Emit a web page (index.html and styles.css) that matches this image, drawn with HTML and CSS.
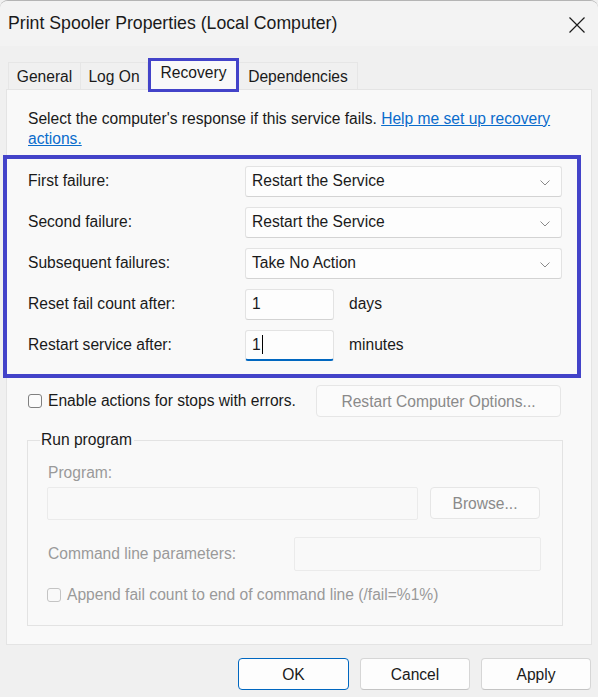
FILE: index.html
```html
<!DOCTYPE html>
<html lang="en">
<head>
<meta charset="utf-8">
<title>Print Spooler Properties (Local Computer)</title>
<link rel="stylesheet" href="styles.css">
</head>
<body>
<div class="window">
  <div class="titlebar">
    <span class="title">Print Spooler Properties (Local Computer)</span>
    <svg class="close" width="16" height="16" viewBox="0 0 16 16"><path d="M0.5 0.5L15.5 15.5M15.5 0.5L0.5 15.5" stroke="#1b1b1b" stroke-width="1.2" fill="none"/></svg>
  </div>
  <div class="tabs">
    <div class="tab t-general">General</div>
    <div class="tab t-logon">Log On</div>
    <div class="tab t-recovery active">Recovery</div>
    <div class="tab t-deps">Dependencies</div>
  </div>
  <div class="panel">
    <p class="intro">Select the computer's response if this service fails. <a class="link" href="#">Help me set up recovery actions.</a></p>
    <div class="highlight">
      <div class="row">
        <span class="label">First failure:</span>
        <div class="select">Restart the Service<svg class="chev" width="10" height="6" viewBox="0 0 10 6"><polyline points="0.5,0.5 5,5 9.5,0.5" fill="none" stroke="#8a8a8a" stroke-width="1"/></svg></div>
      </div>
      <div class="row">
        <span class="label">Second failure:</span>
        <div class="select">Restart the Service<svg class="chev" width="10" height="6" viewBox="0 0 10 6"><polyline points="0.5,0.5 5,5 9.5,0.5" fill="none" stroke="#8a8a8a" stroke-width="1"/></svg></div>
      </div>
      <div class="row">
        <span class="label">Subsequent failures:</span>
        <div class="select">Take No Action<svg class="chev" width="10" height="6" viewBox="0 0 10 6"><polyline points="0.5,0.5 5,5 9.5,0.5" fill="none" stroke="#8a8a8a" stroke-width="1"/></svg></div>
      </div>
      <div class="row">
        <span class="label">Reset fail count after:</span>
        <div class="input">1</div>
        <span class="unit">days</span>
      </div>
      <div class="row">
        <span class="label">Restart service after:</span>
        <div class="input focus">1<span class="caret"></span></div>
        <span class="unit">minutes</span>
      </div>
    </div>
    <div class="checkrow">
      <span class="check"><span class="box"></span>Enable actions for stops with errors.</span>
      <div class="btn disabled restart">Restart Computer Options...</div>
    </div>
    <fieldset class="group">
      <legend>Run program</legend>
      <div class="dlabel prog-label">Program:</div>
      <div class="prog-row">
        <div class="dinput prog-input"></div>
        <div class="btn disabled browse">Browse...</div>
      </div>
      <div class="cmd-row">
        <span class="dlabel cmd-label">Command line parameters:</span>
        <div class="dinput cmd-input"></div>
      </div>
      <div class="append-row">
        <span class="box dbox"></span><span class="dlabel">Append fail count to end of command line (/fail=%1%)</span>
      </div>
    </fieldset>
  </div>
  <div class="buttons">
    <div class="btn ok">OK</div>
    <div class="btn">Cancel</div>
    <div class="btn">Apply</div>
  </div>
</div>
</body>
</html>
```

FILE: styles.css
```css
* { box-sizing: border-box; }

html, body {
  margin: 0;
  padding: 0;
  background: #f0f0f0;
}

body {
  font-family: "Liberation Sans", Arial, sans-serif;
  font-size: 15.6px;
  color: #1a1a1a;
}

.window {
  width: 598px;
  height: 697px;
  background: #f0f0f0;
  border-top: 1px solid #b4b4b4;
  border-radius: 8px 8px 0 0;
  overflow: hidden;
}

.titlebar {
  height: 45px;
  display: flex;
  align-items: center;
  justify-content: space-between;
  padding: 0 13px 0 8px;
  background: #f3f3f3;
}

.title {
  font-size: 17.7px;
  color: #1a1a1a;
}

.close {
  display: block;
  margin-top: 2px;
}

.tabs {
  display: flex;
  align-items: flex-end;
  height: 31px;
  margin-top: 12px;
  padding-left: 8px;
}

.tab {
  height: 27px;
  display: flex;
  align-items: center;
  justify-content: center;
  border: 1px solid #e6e6e6;
  border-bottom: none;
  background: #f0f0f0;
  color: #1a1a1a;
  padding-top: 1px;
}

.t-general { width: 73px; }
.t-logon { width: 67px; border-left: none; }
.t-deps { width: 119px; border-left: none; }

.tab.active {
  position: relative;
  z-index: 1;
  width: 91px;
  height: 34px;
  margin-bottom: -3px;
  border: 3px solid #4343c9;
  background: #f9f9f9;
  align-items: flex-start;
  padding-top: 3px;
}

.panel {
  margin: 0 6px;
  height: 556px;
  border: 1px solid #e4e4e4;
  background: #f9f9f9;
  padding: 0 30px 0 21px;
}

.intro {
  margin: 19px 0 0;
  line-height: 20px;
  width: 540px;
}

.link {
  color: #0a6ccc;
  text-decoration: underline;
}

.highlight {
  margin: 6px 0 0 -25px;
  width: 578px;
  border: 4px solid #4343c9;
  padding: 6px 0 14px 21px;
  display: flex;
  flex-direction: column;
  gap: 10px;
}

.row {
  display: flex;
  align-items: center;
  height: 31px;
  padding-top: 1px;
}

.label {
  width: 217px;
  flex: none;
}

.select {
  position: relative;
  width: 317px;
  height: 31px;
  display: flex;
  align-items: center;
  padding-left: 6px;
  background: #fdfdfd;
  border: 1px solid #e3e3e3;
  border-bottom-color: #d3d3d3;
  border-radius: 3px;
}

.chev {
  position: absolute;
  right: 11px;
  top: 13px;
}

.input {
  width: 89px;
  height: 31px;
  display: flex;
  align-items: center;
  padding-left: 6px;
  background: #fdfdfd;
  border: 1px solid #e3e3e3;
  border-bottom-color: #d3d3d3;
  border-radius: 3px;
}

.input.focus {
  border-bottom: 2px solid #0067c0;
}

.caret {
  display: inline-block;
  width: 1px;
  height: 19px;
  background: #000;
  margin-left: 1px;
}

.unit {
  margin-left: 15px;
}

.checkrow {
  display: flex;
  align-items: center;
  height: 32px;
  margin-top: 7px;
}

.check {
  display: flex;
  align-items: center;
}

.box {
  display: inline-block;
  width: 14px;
  height: 14px;
  border: 1px solid #808080;
  border-radius: 3px;
  background: #fbfbfb;
  margin-right: 6px;
  flex: none;
}

.btn {
  height: 32px;
  display: flex;
  align-items: center;
  justify-content: center;
  background: #fdfdfd;
  border: 1px solid #d6d6d6;
  border-bottom-color: #c4c4c4;
  border-radius: 4px;
  color: #1a1a1a;
  padding-top: 1px;
}

.btn.disabled {
  background: #fbfbfb;
  border: 1px solid #e6e6e6;
  color: #8a8a8a;
}

.restart {
  margin-left: auto;
  width: 245px;
}

.group {
  margin: 13px 0 0 -1px;
  width: 536px;
  border: 1px solid #e3e3e3;
  padding: 0 20px 15px 20px;
  min-width: 0;
}

.group legend {
  margin-left: -8px;
  padding: 0 2px 0 1px;
  line-height: 20px;
  color: #1a1a1a;
}

.dlabel {
  color: #9a9a9a;
}

.prog-label {
  margin-top: 13px;
  line-height: 20px;
}

.prog-row {
  display: flex;
  align-items: flex-start;
  margin-top: 4px;
  margin-left: -1px;
}

.dinput {
  background: #f9f9f9;
  border: 1px solid #ebebeb;
  border-radius: 2px;
}

.prog-input {
  width: 371px;
  height: 33px;
}

.browse {
  width: 110px;
  margin-left: 12px;
}

.cmd-row {
  display: flex;
  align-items: center;
  margin-top: 17px;
  height: 34px;
}

.cmd-label {
  width: 246px;
  flex: none;
}

.cmd-input {
  width: 247px;
  height: 34px;
}

.append-row {
  display: flex;
  align-items: center;
  height: 30px;
  margin-top: 9px;
  margin-left: -1px;
}

.dbox {
  border-color: #c4c4c4;
  background: #f9f9f9;
}

.buttons {
  display: flex;
  justify-content: flex-end;
  gap: 11px;
  margin-top: 13px;
  padding-right: 7px;
}

.buttons .btn {
  width: 110px;
}

.buttons .btn.ok {
  width: 111px;
  border: 1px solid #0067c0;
}
```
